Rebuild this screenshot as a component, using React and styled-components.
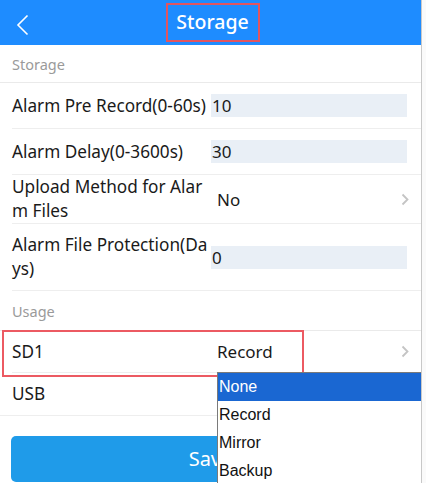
import React from "react";
import styled, { createGlobalStyle } from "styled-components";

const GlobalStyle = createGlobalStyle`
  html, body { margin: 0; padding: 0; background: #fff; overflow: hidden; }
  * { box-sizing: border-box; }
`;

const Page = styled.div`
  width: 426px;
  height: 483px;
  display: flex;
  overflow: hidden;
  font-family: "Noto Sans", "Open Sans", sans-serif;
`;

const Main = styled.div`
  position: relative;
  width: 421px;
  flex: none;
  background: #fff;
`;

const SideStrip = styled.div`
  flex: 1;
  border-left: 1px solid #c8c8c8;
  background: #fafafa;
`;

const Header = styled.header`
  height: 45px;
  background: #1e8cff;
  display: flex;
  align-items: center;
  justify-content: center;
  position: relative;
`;

const BackButton = styled.div`
  position: absolute;
  left: 16px;
  top: 14px;
  width: 14px;
  height: 22px;
  display: flex;
`;

const TitleBox = styled.div`
  width: 94px;
  height: 39px;
  margin-left: 4px;
  border: 2px solid #e25560;
  display: flex;
  align-items: center;
  justify-content: center;
  color: #fff;
  font-size: 19.5px;
  font-weight: 500;
  padding-bottom: 3px;
`;

const SectionHeader = styled.div`
  height: ${(p) => p.$h}px;
  padding-left: 12px;
  display: flex;
  align-items: center;
  color: #9a9a9a;
  font-size: 14.5px;
  border-bottom: 1px solid #eaeaea;
`;

const Row = styled.div`
  margin-left: ${(p) => (p.$full ? 0 : 12)}px;
  padding-left: ${(p) => (p.$full ? 12 : 0)}px;
  min-height: ${(p) => p.$h}px;
  padding-top: ${(p) => p.$pad || 0}px;
  padding-bottom: ${(p) => p.$pad || 0}px;
  display: grid;
  grid-template-columns: 199px 1fr;
  align-items: center;
  border-bottom: 1px solid #eeeeee;
`;

const Label = styled.div`
  color: #1a1a1a;
  font-size: 17.2px;
  line-height: 24px;
  word-break: break-all;
  white-space: normal;
`;

const Input = styled.div`
  width: 196px;
  height: 23px;
  background: #e9eff6;
  color: #1a1a1a;
  font-size: 17px;
  line-height: 23px;
  padding-left: 1px;
`;

const SelectValue = styled.div`
  display: flex;
  align-items: center;
  justify-content: space-between;
  padding-left: 6px;
  padding-right: 12px;
  color: #1a1a1a;
  font-size: 17px;
`;

const Chevron = styled.svg`
  width: 8px;
  height: 13px;
`;

const SaveButton = styled.button`
  display: flex;
  align-items: center;
  justify-content: center;
  margin: 20px 11px 0 11px;
  width: 399px;
  height: 46px;
  border: none;
  border-radius: 5px;
  background: #1f9be9;
  color: #fff;
  font-family: "Noto Sans", sans-serif;
  font-size: 20px;
  padding: 0 0 2px 0;
`;

const Highlight = styled.div`
  position: absolute;
  left: 2px;
  top: 330px;
  width: 302px;
  height: 47px;
  border: 2px solid #ec5a62;
  pointer-events: none;
`;

const Dropdown = styled.ul`
  position: absolute;
  left: 217px;
  top: 372px;
  width: 204px;
  margin: 0;
  padding: 0;
  list-style: none;
  background: #fff;
  border-left: 1px solid #7a7a7a;
  border-top: 1px solid #7a7a7a;
  font-family: "Liberation Sans", Arial, sans-serif;
  font-size: 16px;
`;

const Option = styled.li`
  height: 28px;
  line-height: 28px;
  padding-left: 1px;
  color: ${(p) => (p.$selected ? "#fff" : "#111")};
  background: ${(p) => (p.$selected ? "#1a67d2" : "#fff")};
`;

const ChevronIcon = () => (
  <Chevron viewBox="0 0 8 13">
    <path d="M1.5 1.5 L6.5 6.5 L1.5 11.5" fill="none" stroke="#c4c4c4" strokeWidth="1.8" />
  </Chevron>
);

export default function App() {
  return (
    <Page>
      <GlobalStyle />
      <Main>
        <Header>
          <BackButton>
            <svg width="14" height="22" viewBox="0 0 14 22">
              <path d="M11.5 1.5 L2 11 L11.5 20.5" fill="none" stroke="#fff" strokeWidth="1.6" />
            </svg>
          </BackButton>
          <TitleBox>Storage</TitleBox>
        </Header>

        <SectionHeader $h={38}>Storage</SectionHeader>
        <Row $h={46}>
          <Label>Alarm Pre Record(0-60s)</Label>
          <Input>10</Input>
        </Row>
        <Row $h={46}>
          <Label>Alarm Delay(0-3600s)</Label>
          <Input>30</Input>
        </Row>
        <Row $h={48}>
          <Label>Upload Method for Alarm Files</Label>
          <SelectValue>
            No
            <ChevronIcon />
          </SelectValue>
        </Row>
        <Row $h={67} $pad={9}>
          <Label>Alarm File Protection(Days)</Label>
          <Input>0</Input>
        </Row>

        <SectionHeader $h={40}>Usage</SectionHeader>
        <Row $h={42}>
          <Label>SD1</Label>
          <SelectValue>
            Record
            <ChevronIcon />
          </SelectValue>
        </Row>
        <Row $h={43} $full>
          <Label>USB</Label>
        </Row>

        <SaveButton>Save</SaveButton>

        <Highlight />
        <Dropdown>
          <Option $selected>None</Option>
          <Option>Record</Option>
          <Option>Mirror</Option>
          <Option>Backup</Option>
        </Dropdown>
      </Main>
      <SideStrip />
    </Page>
  );
}
